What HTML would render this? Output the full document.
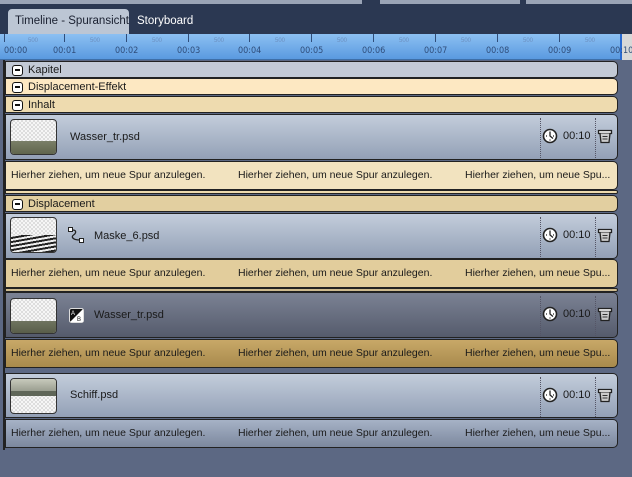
<!DOCTYPE html>
<html><head><meta charset="utf-8"><style>
*{margin:0;padding:0;box-sizing:border-box}
body{width:632px;height:477px;overflow:hidden;background:#5c6883;font-family:"Liberation Sans",sans-serif;font-size:11px;color:#1a1a1a;position:relative}
.a{position:absolute}
.top{left:0;top:0;width:632px;height:34px;background:#2b3852}
.tab{left:8px;top:9px;width:121px;height:25px;background:#bcc6d4;border-radius:4px 4px 0 0;font-size:11.5px;padding:6px 0 0 7px;color:#1a2030;white-space:nowrap}
.tab2{left:137px;top:15px;color:#fff;font-size:11.5px}
.ruler{left:0;top:34px;width:620px;height:26px;background:linear-gradient(#8cc0f2,#5a9ae0);border-bottom:1px solid #3e6fa8}
.rend{left:620px;top:34px;width:12px;height:26px;background:#d8d8d8}
.sec{top:46px;font-size:9px;color:#2f4d7a;font-family:"DejaVu Sans Condensed","Liberation Sans",sans-serif}
.tk{top:34px;width:1px;height:8px;background:#2f4d7a}
.half{top:38px;font-size:6px;color:#6c8fbf}
.row{left:5px;width:613px;border:1px solid #222;border-radius:0 5px 5px 0}
.hd{height:17px;padding:2px 0 0 22px;font-size:11px}
.hd:before{content:"";position:absolute;left:6px;top:3px;width:9px;height:9px;border:1.5px solid #111;border-radius:3px;background:#fff}
.hd:after{content:"";position:absolute;left:9px;top:7px;width:5px;height:1.5px;background:#111}
.clip{height:46px;background:linear-gradient(#c3cddb,#93a0b6)}
.thumb{left:5px;width:47px;height:36px;border:1px solid #333;border-radius:4px;overflow:hidden}
.chk{background-color:#f2f2f2;background-image:repeating-conic-gradient(#ddd 0 25%,#f6f6f6 0 50%);background-size:4px 4px}
.drop{height:29px;padding:7px 0 0 5px;font-size:10.5px;white-space:nowrap;overflow:hidden}
.drop span{display:inline-block;width:227px}
.dur{font-size:11px}
.dl{width:0;border-left:1px dotted #556}
</style></head><body>
<svg width="0" height="0" style="position:absolute"><defs>
<symbol id="clk" viewBox="0 0 16 16"><circle cx="8" cy="8" r="6.5" fill="#fff" stroke="#222" stroke-width="1.6"/><path d="M8 3.5V8l3 2.5M4 8h1M11 8h1M8 11.5v1" stroke="#222" stroke-width="1.3" fill="none"/></symbol>
<symbol id="trs" viewBox="0 0 16 16"><path d="M1.5 2.5h13v3h-13z" fill="#eee" stroke="#222" stroke-width="1.3"/><path d="M3 5.5l1 9h8l1-9" fill="#ccc" stroke="#222" stroke-width="1.3"/><path d="M5.5 8.5h5M5.5 11h5" stroke="#333" stroke-width="1"/></symbol>
</defs></svg>
<div class="a top"></div>
<div class="a" style="left:0;top:0;width:362px;height:4px;background:#9aa4b6"></div>
<div class="a" style="left:380px;top:0;width:140px;height:4px;background:#9aa4b6"></div>
<div class="a" style="left:526px;top:0;width:106px;height:4px;background:#9aa4b6"></div>
<div class="a tab">Timeline - Spuransicht</div>
<div class="a tab2">Storyboard</div>
<div class="a ruler"></div>
<div class="a rend"></div>
<div class="a" style="left:620px;top:34px;width:2px;height:26px;background:#2a6ad0"></div>
<div class="a sec" style="left:4px">00:00</div><div class="a tk" style="left:4px"></div>
<div class="a sec" style="left:53px">00:01</div><div class="a tk" style="left:64px"></div>
<div class="a sec" style="left:115px">00:02</div><div class="a tk" style="left:126px"></div>
<div class="a sec" style="left:177px">00:03</div><div class="a tk" style="left:188px"></div>
<div class="a sec" style="left:238px">00:04</div><div class="a tk" style="left:249px"></div>
<div class="a sec" style="left:300px">00:05</div><div class="a tk" style="left:311px"></div>
<div class="a sec" style="left:362px">00:06</div><div class="a tk" style="left:373px"></div>
<div class="a sec" style="left:424px">00:07</div><div class="a tk" style="left:435px"></div>
<div class="a sec" style="left:486px">00:08</div><div class="a tk" style="left:497px"></div>
<div class="a sec" style="left:548px">00:09</div><div class="a tk" style="left:559px"></div>
<div class="a sec" style="left:610px">00:10</div>
<div class="a half" style="left:28px">500</div><div class="a half" style="left:90px">500</div><div class="a half" style="left:152px">500</div><div class="a half" style="left:214px">500</div><div class="a half" style="left:275px">500</div><div class="a half" style="left:337px">500</div><div class="a half" style="left:399px">500</div><div class="a half" style="left:461px">500</div><div class="a half" style="left:523px">500</div><div class="a half" style="left:585px">500</div>
<div class="a" style="left:3px;top:60px;width:2px;height:390px;background:#222"></div>

<div class="a row hd" style="top:61px;background:#c3cad6">Kapitel</div>
<div class="a row hd" style="top:78px;background:#fde8c2">Displacement-Effekt</div>
<div class="a row hd" style="top:96px;background:#eedbaf">Inhalt</div>

<div class="a row clip" style="top:114px"></div>
<div class="a thumb chk" style="top:119px;left:10px"><div style="margin-top:21px;height:15px;background:linear-gradient(#7a7f68,#5c6148)"></div></div>
<div class="a" style="left:70px;top:131px">Wasser_tr.psd</div>
<div class="a dl" style="left:540px;top:118px;height:40px"></div><div class="a dl" style="left:595px;top:118px;height:40px"></div>
<svg class="a" style="left:542px;top:128px" width="16" height="16"><use href="#clk"/></svg><div class="a dur" style="left:563px;top:130px">00:10</div>
<svg class="a" style="left:597px;top:128px" width="16" height="16"><use href="#trs"/></svg>

<div class="a row drop" style="top:161px;background:#f2e3bf"><span>Hierher ziehen, um neue Spur anzulegen.</span><span>Hierher ziehen, um neue Spur anzulegen.</span><span>Hierher ziehen, um neue Spu...</span></div>
<div class="a row" style="top:190px;height:4px;background:#eedbaf"></div>
<div class="a row hd" style="top:195px;background:#e2cfa0">Displacement</div>

<div class="a row clip" style="top:213px"></div>
<div class="a thumb chk" style="top:217px;left:10px"><div style="margin-top:17px;height:19px;background:repeating-linear-gradient(170deg,#eee 0 2px,#222 2px 4px)"></div></div>
<svg class="a" style="left:67px;top:226px" width="18" height="18" viewBox="0 0 18 18"><rect x="1.5" y="1.5" width="4" height="4" fill="#fff" stroke="#222"/><rect x="12.5" y="12.5" width="4" height="4" fill="#fff" stroke="#222"/><path d="M5.5 4c4 0 4 3 1 5s0 5 6 5" fill="none" stroke="#222" stroke-width="1.3"/></svg>
<div class="a" style="left:94px;top:230px">Maske_6.psd</div>
<div class="a dl" style="left:540px;top:217px;height:40px"></div><div class="a dl" style="left:595px;top:217px;height:40px"></div>
<svg class="a" style="left:542px;top:227px" width="16" height="16"><use href="#clk"/></svg><div class="a dur" style="left:563px;top:229px">00:10</div>
<svg class="a" style="left:597px;top:227px" width="16" height="16"><use href="#trs"/></svg>

<div class="a row drop" style="top:259px;background:#e2cd9c"><span>Hierher ziehen, um neue Spur anzulegen.</span><span>Hierher ziehen, um neue Spur anzulegen.</span><span>Hierher ziehen, um neue Spu...</span></div>
<div class="a row" style="top:288px;height:4px;background:#cfbc90"></div>

<div class="a row clip" style="top:292px;background:linear-gradient(#7b8294,#555b6c)"></div>
<div class="a thumb chk" style="top:298px;left:10px"><div style="margin-top:22px;height:14px;background:linear-gradient(#6f7460,#555a45)"></div></div>
<svg class="a" style="left:69px;top:308px" width="15" height="15" viewBox="0 0 15 15"><rect x="0.5" y="0.5" width="14" height="14" rx="2" fill="#111" stroke="#ddd"/><path d="M1 14L14 1V14Z" fill="#fff"/><text x="2" y="7" font-size="6" fill="#fff" font-family="Liberation Sans">A</text><text x="8" y="13" font-size="6" fill="#111" font-family="Liberation Sans">B</text></svg>
<div class="a" style="left:94px;top:309px">Wasser_tr.psd</div>
<div class="a dl" style="left:540px;top:296px;height:40px"></div><div class="a dl" style="left:595px;top:296px;height:40px"></div>
<svg class="a" style="left:542px;top:306px" width="16" height="16"><use href="#clk"/></svg><div class="a dur" style="left:563px;top:308px">00:10</div>
<svg class="a" style="left:597px;top:306px" width="16" height="16"><use href="#trs"/></svg>

<div class="a row drop" style="top:339px;background:linear-gradient(#c8a868,#a88a4c)"><span>Hierher ziehen, um neue Spur anzulegen.</span><span>Hierher ziehen, um neue Spur anzulegen.</span><span>Hierher ziehen, um neue Spu...</span></div>

<div class="a row clip" style="top:373px;height:45px"></div>
<div class="a thumb chk" style="top:378px;left:10px"><div style="height:12px;background:linear-gradient(#c8cabc,#9a9e90)"></div><div style="height:5px;background:#5f6658"></div></div>
<div class="a" style="left:70px;top:389px">Schiff.psd</div>
<div class="a dl" style="left:540px;top:377px;height:40px"></div><div class="a dl" style="left:595px;top:377px;height:40px"></div>
<svg class="a" style="left:542px;top:387px" width="16" height="16"><use href="#clk"/></svg><div class="a dur" style="left:563px;top:389px">00:10</div>
<svg class="a" style="left:597px;top:387px" width="16" height="16"><use href="#trs"/></svg>

<div class="a row drop" style="top:419px;background:linear-gradient(#a6b2c6,#7c889e)"><span>Hierher ziehen, um neue Spur anzulegen.</span><span>Hierher ziehen, um neue Spur anzulegen.</span><span>Hierher ziehen, um neue Spu...</span></div>
</body></html>
